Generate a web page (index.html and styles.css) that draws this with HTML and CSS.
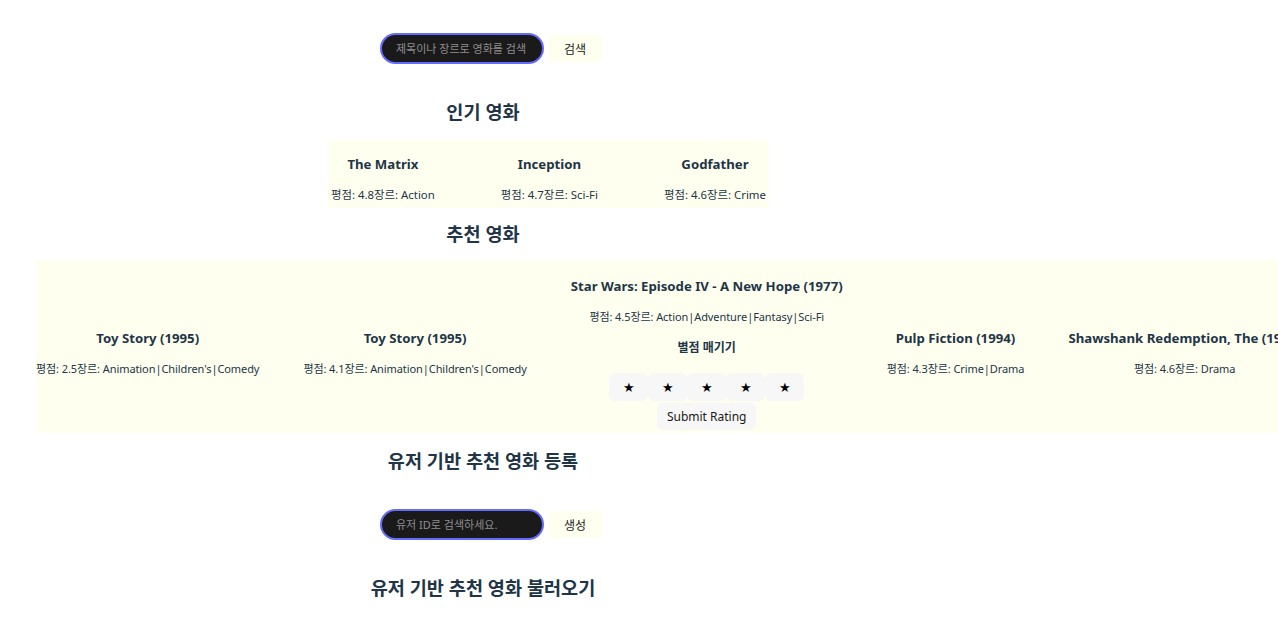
FILE: index.html
```html
<!DOCTYPE html>
<html lang="ko">
<head>
<meta charset="utf-8">
<title>Movies</title>
<link rel="stylesheet" href="styles.css">
</head>
<body>
<div class="page">
  <form class="search search-top">
    <input class="search-input" type="text" placeholder="제목이나 장르로 영화를 검색">
    <button class="search-btn" type="button">검색</button>
  </form>

  <h2 class="section-title t-popular">인기 영화</h2>
  <div class="popular-list">
    <div class="movie">
      <h3 class="movie-title">The Matrix</h3>
      <p class="movie-info">평점: 4.8장르: Action</p>
    </div>
    <div class="movie">
      <h3 class="movie-title">Inception</h3>
      <p class="movie-info">평점: 4.7장르: Sci-Fi</p>
    </div>
    <div class="movie">
      <h3 class="movie-title">Godfather</h3>
      <p class="movie-info">평점: 4.6장르: Crime</p>
    </div>
  </div>

  <h2 class="section-title t-rec">추천 영화</h2>
  <div class="rec-list">
    <div class="movie">
      <h3 class="movie-title">Toy Story (1995)</h3>
      <p class="movie-info">평점: 2.5장르: Animation|Children's|Comedy</p>
    </div>
    <div class="movie">
      <h3 class="movie-title">Toy Story (1995)</h3>
      <p class="movie-info">평점: 4.1장르: Animation|Children's|Comedy</p>
    </div>
    <div class="movie">
      <h3 class="movie-title">Star Wars: Episode IV - A New Hope (1977)</h3>
      <p class="movie-info">평점: 4.5장르: Action|Adventure|Fantasy|Sci-Fi</p>
      <h4 class="rate-title">별점 매기기</h4>
      <div class="stars">
        <button class="star" type="button">★</button>
        <button class="star" type="button">★</button>
        <button class="star" type="button">★</button>
        <button class="star" type="button">★</button>
        <button class="star" type="button">★</button>
      </div>
      <button class="submit" type="button">Submit Rating</button>
    </div>
    <div class="movie">
      <h3 class="movie-title">Pulp Fiction (1994)</h3>
      <p class="movie-info">평점: 4.3장르: Crime|Drama</p>
    </div>
    <div class="movie">
      <h3 class="movie-title">Shawshank Redemption, The (1994)</h3>
      <p class="movie-info">평점: 4.6장르: Drama</p>
    </div>
  </div>

  <h2 class="section-title t-user">유저 기반 추천 영화 등록</h2>
  <form class="search search-user">
    <input class="search-input" type="text" placeholder="유저 ID로 검색하세요.">
    <button class="search-btn" type="button">생성</button>
  </form>

  <h2 class="section-title t-load">유저 기반 추천 영화 불러오기</h2>
</div>
</body>
</html>
```
FILE: styles.css
```css
html {
  overflow: hidden;
}
body {
  margin: 0;
  background: #ffffff;
  color: #213547;
  font-family: "Noto Sans", "Noto Sans CJK KR", sans-serif;
}
.page {
  width: 966px;
  display: flex;
  flex-direction: column;
  align-items: center;
  padding-top: 33px;
}
.search {
  display: flex;
  align-items: center;
  gap: 4px;
  margin: 0 0 0 16px;
}
.search-input {
  width: 164px;
  height: 31px;
  box-sizing: border-box;
  background: #1a1a1a;
  border: 2px solid #646cff;
  border-radius: 16px;
  padding: 0 14px;
  color: #ddd;
  font-family: inherit;
  font-size: 11px;
  outline: none;
}
.search-input::placeholder {
  color: #8f8f8f;
}
.search-btn {
  width: 54px;
  height: 27px;
  border: none;
  background: #fffff0;
  color: #1a1a1a;
  font-family: inherit;
  font-size: 12px;
  padding: 0;
}
.section-title {
  margin: 0;
  font-size: 18.6px;
  line-height: 24px;
  font-weight: 700;
  color: #213547;
}
.t-popular { margin-top: 36px; }
.t-rec { margin-top: 14px; }
.t-user { margin-top: 16px; }
.t-load { margin-top: 36px; }
.search-user { margin-top: 36px; }

.popular-list {
  align-self: flex-start;
  margin: 16px 0 0 328px;
  display: flex;
  gap: 66px;
  padding: 14px 3px 4px;
  background: #fffff0;
}
.movie {
  display: flex;
  flex-direction: column;
  align-items: center;
  flex-shrink: 0;
}
.movie-title {
  margin: 0 0 12px;
  font-size: 13.2px;
  line-height: 20px;
  font-weight: 700;
  white-space: nowrap;
}
.movie-info {
  margin: 0;
  font-size: 11px;
  line-height: 18px;
  white-space: nowrap;
}
.popular-list .movie-info {
  font-size: 11.4px;
}
.rec-list .movie-info {
  letter-spacing: -0.08px;
}
.rec-list {
  align-self: flex-start;
  margin: 14px 0 0 36px;
  display: flex;
  align-items: center;
  gap: 44px;
  padding: 16px 0 3px;
  width: 1300px;
  background: #fffff0;
}
.rate-title {
  margin: 13px 0 16px;
  font-size: 12px;
  line-height: 18px;
  font-weight: 700;
}
.stars {
  display: flex;
}
.star {
  width: 39px;
  height: 28px;
  border: none;
  border-radius: 6px;
  background: #f7f7f7;
  color: #000;
  font-size: 13px;
  padding: 0;
  font-family: "DejaVu Sans", sans-serif;
}
.submit {
  margin-top: 2px;
  width: 99px;
  height: 27px;
  border: none;
  border-radius: 6px;
  background: #f7f7f7;
  color: #1a1a1a;
  font-family: inherit;
  font-size: 12px;
  padding: 0;
}
```
